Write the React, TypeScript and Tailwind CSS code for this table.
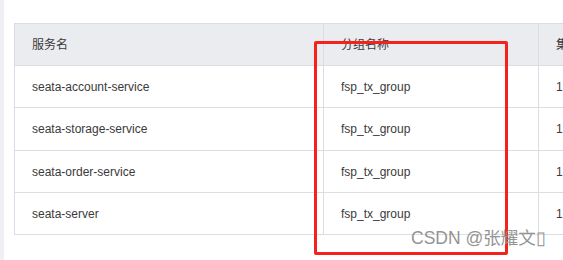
import React, { FC } from "react";

const rows = [
  { name: "seata-account-service", group: "fsp_tx_group", cluster: "1" },
  { name: "seata-storage-service", group: "fsp_tx_group", cluster: "1" },
  { name: "seata-order-service", group: "fsp_tx_group", cluster: "1" },
  { name: "seata-server", group: "fsp_tx_group", cluster: "1" },
];

const cell = "flex items-center pl-[17px] border-r border-b border-[#dcdde3] whitespace-nowrap";

const App: FC = () => {
  return (
    <div
      className="relative w-[563px] h-[260px] bg-white overflow-hidden flex text-[12px] text-[#3a3a3a]"
      style={{ fontFamily: '"Liberation Sans", "Noto Sans CJK SC", sans-serif' }}
    >
      {/* left side strip */}
      <div className="w-[4px] h-full bg-[#eef0f4] shrink-0" />

      <div className="pl-[10px] pt-[23px]">
        {/* table */}
        <div className="grid grid-cols-[309px_215px_120px] border-l border-t border-[#dcdde3]">
          <div className={`${cell} h-[42px] bg-[#ebecf0]`}>服务名</div>
          <div className={`${cell} h-[42px] bg-[#ebecf0]`}>分组名称</div>
          <div className={`${cell} h-[42px] bg-[#ebecf0]`}>集群</div>
          {rows.map((r, i) => (
            <React.Fragment key={i}>
              <div className={`${cell} ${i === 1 ? "h-[43px]" : "h-[42px]"}`}>{r.name}</div>
              <div className={`${cell} ${i === 1 ? "h-[43px]" : "h-[42px]"}`}>{r.group}</div>
              <div className={`${cell} ${i === 1 ? "h-[43px]" : "h-[42px]"}`}>{r.cluster}</div>
            </React.Fragment>
          ))}
        </div>
      </div>

      {/* red highlight box */}
      <div className="absolute left-[314px] top-[41px] w-[194px] h-[214px] border-[3px] border-[#f5221b] rounded-[2px]" />

      {/* watermark */}
      <div className="absolute left-[411px] top-[227px] text-[17.5px] leading-[22px] text-[#949494] whitespace-nowrap">
        CSDN @张耀文▯
      </div>
    </div>
  );
};

export default App;
